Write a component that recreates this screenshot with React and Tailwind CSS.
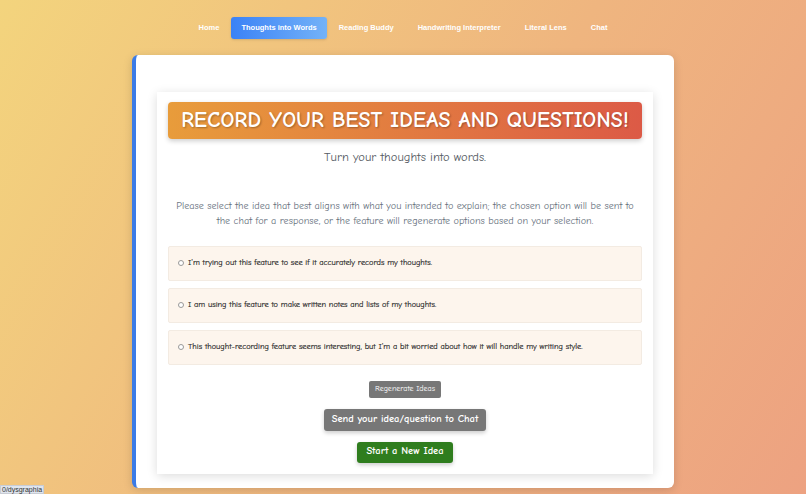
import React from "react";

const comic = { fontFamily: '"Comic Sans MS", "Comic Neue", "DejaVu Sans", sans-serif' };

export default function App() {
  const navs = ["Home", "Thoughts into Words", "Reading Buddy", "Handwriting Interpreter", "Literal Lens", "Chat"];
  const options = [
    "I'm trying out this feature to see if it accurately records my thoughts.",
    "I am using this feature to make written notes and lists of my thoughts.",
    "This thought-recording feature seems interesting, but I'm a bit worried about how it will handle my writing style.",
  ];
  return (
    <div className="relative w-[806px] h-[494px] overflow-hidden bg-[linear-gradient(120deg,#f3d47d_0%,#efb57f_55%,#eda281_100%)]">
      <nav className="flex justify-center items-center pt-[17px] font-['Liberation_Sans',Arial,sans-serif] font-bold text-[7.5px] text-white">
        {navs.map((n, i) => (
          <div
            key={n}
            className={
              i === 1
                ? "h-[22px] px-[10px] flex items-center rounded-[3px] bg-[linear-gradient(90deg,#3b82f6,#73b2f8)] shadow-sm"
                : "h-[22px] px-[12px] flex items-center"
            }
          >
            {n}
          </div>
        ))}
      </nav>

      <div className="mx-auto mt-[16px] w-[542px] h-[433px] bg-white rounded-[6px] border-l-[4px] border-[#3b7be6] shadow-[0_2px_10px_rgba(0,0,0,0.15)] pt-[37px] pl-[21px] pr-[21px]">
        <div
          className="w-[496px] h-[382px] bg-white shadow-[0_2px_10px_rgba(0,0,0,0.14)] px-[11px] pt-[10px] flex flex-col items-center"
          style={comic}
        >
          <div className="w-full h-[37px] rounded-[4px] bg-[linear-gradient(90deg,#e89c3b,#dc5a46)] shadow-[0_2px_5px_rgba(0,0,0,0.2)] flex items-center justify-center">
            <span className="text-white font-bold text-[21.8px] tracking-[0.2px] [text-shadow:1px_1px_2px_rgba(0,0,0,0.3)]">
              RECORD YOUR BEST IDEAS AND QUESTIONS!
            </span>
          </div>
          <div className="mt-[9px] text-[12.5px] text-[#555b63]">Turn your thoughts into words.</div>
          <div className="mt-[32px] text-[10.2px] leading-[15px] text-[#66707c] text-center px-[4px]">
            Please select the idea that best aligns with what you intended to explain; the chosen option will be sent to the chat for a response, or the feature will regenerate options based on your selection.
          </div>
          <div className="mt-[17px] w-full flex flex-col gap-[7px]">
            {options.map((o) => (
              <div
                key={o}
                className="h-[35px] bg-[#fdf5ed] border border-[#f3ebe2] rounded-[2px] flex items-center px-[9px] gap-[4px] text-[8.3px] text-[#222] [-webkit-text-stroke:0.15px_#222]"
              >
                <span className="w-[6px] h-[6px] rounded-full border border-[#999] bg-white shrink-0" />
                <span>{o}</span>
              </div>
            ))}
          </div>
          <button className="mt-[16px] h-[17px] px-[6px] bg-[#777] text-white text-[8px] rounded-[2px]">
            Regenerate Ideas
          </button>
          <button className="mt-[11px] h-[22px] px-[8px] bg-[#777] text-white font-bold text-[10.5px] rounded-[3px] shadow-[0_2px_4px_rgba(0,0,0,0.2)]">
            Send your idea/question to Chat
          </button>
          <button className="mt-[11px] h-[21px] px-[9px] bg-[#2f7d1e] text-white font-bold text-[10.5px] rounded-[3px] shadow-[0_2px_4px_rgba(0,0,0,0.2)]">
            Start a New Idea
          </button>
        </div>
      </div>

      <div className="absolute left-0 bottom-0 h-[9px] px-[1px] bg-[#dfe5ee] border border-[#c8ccd4] text-[7px] leading-[7px] text-[#333] font-['Liberation_Sans',Arial,sans-serif]">
        0/dysgraphia
      </div>
    </div>
  );
}
